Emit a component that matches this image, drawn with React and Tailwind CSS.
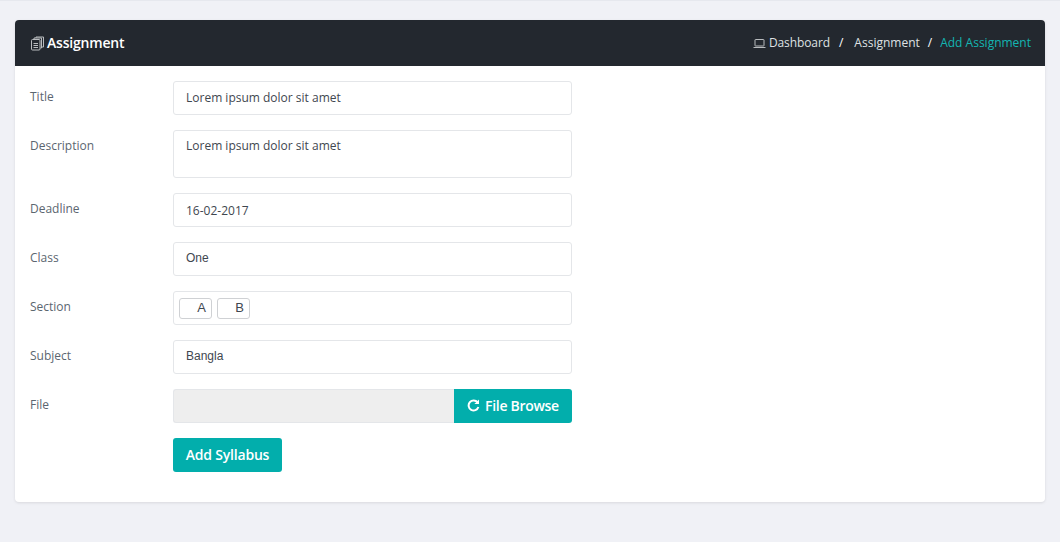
function Row({ label, children }) {
  return (
    <div className="flex">
      <label className="w-[143px] pt-[7px] text-[12px] leading-[18px] text-[#5b6670]">{label}</label>
      <div className="w-[399px]">{children}</div>
    </div>
  );
}

function Field({ value, helvetica, lower }) {
  return (
    <input
      readOnly
      value={value}
      className={`block h-[34px] w-full rounded-[3px] border border-[#e4e6e9] bg-white px-3 text-[#3f4750] outline-none ${
        lower ? "pb-0" : "pb-[2px]"
      } ${helvetica ? "font-['Liberation_Sans',sans-serif] text-[12px]" : "text-[12px]"}`}
    />
  );
}

function BooksIcon() {
  return (
    <svg width="13" height="15" viewBox="0 0 13 15" fill="none" stroke="#b9bcbf" strokeWidth="1">
      <rect x="0.5" y="3.5" width="8.5" height="10.5" rx="1" />
      <path d="M3 3V2h7.5v10H9.5M5 2V1h7.5v10H10.5" />
      <path d="M2.5 7.5h4.5M2.5 9.5h4.5M2.5 11.5h4.5" />
    </svg>
  );
}

function LaptopIcon() {
  return (
    <svg width="13" height="11" viewBox="0 0 13 11" fill="none" stroke="#b9bcbf" strokeWidth="1">
      <rect x="2" y="1.5" width="9" height="6.5" rx="0.5" />
      <path d="M0.5 9.5h12" />
    </svg>
  );
}

// font-awesome style refresh, thicker than the lucide one
function RefreshIcon() {
  return (
    <svg width="13" height="13" viewBox="0 0 13 13" fill="none" stroke="white" strokeWidth="2">
      <path d="M10.6 3.4A5 5 0 1 0 11.4 8" />
      <path d="M12 0.5v4.6H7.4z" fill="white" stroke="none" />
    </svg>
  );
}

export default function App() {
  return (
    <div className="h-[542px] overflow-hidden border-t border-[#e6e8ee] bg-[#f0f1f6] px-[15px] pt-[19px] font-['Open_Sans',sans-serif]">
      <div className="h-[482px] rounded-[4px] bg-white shadow-[0_1px_3px_rgba(0,0,0,0.1)]">
        <div className="flex h-[46px] items-center justify-between rounded-t-[4px] bg-[#23282f] pl-4 pr-[14px]">
          <div className="flex items-center gap-[3px] text-[14px] font-semibold tracking-[-0.2px] text-white">
            <BooksIcon />
            <span className="pb-[2px]">Assignment</span>
          </div>
          <div className="flex items-center text-[12px] text-[#dfe1e3]">
            <LaptopIcon />
            <span className="ml-[3px] tracking-[-0.1px]">Dashboard</span>
            <span className="ml-[9px] mr-[11px] text-white">/</span>
            <span>Assignment</span>
            <span className="mx-[8px] text-white">/</span>
            <span className="text-[#13b5b2]">Add Assignment</span>
          </div>
        </div>
        <form className="flex flex-col gap-[15px] pl-[15px] pt-[15px]">
          <Row label="Title">
            <Field value="Lorem ipsum dolor sit amet" />
          </Row>
          <Row label="Description">
            <textarea
              readOnly
              value="Lorem ipsum dolor sit amet"
              className="block h-[48px] w-full resize-none rounded-[3px] border border-[#e4e6e9] bg-white px-3 py-[6px] text-[12px] leading-[18px] text-[#3f4750] outline-none"
            />
          </Row>
          <Row label="Deadline">
            <Field value="16-02-2017" lower />
          </Row>
          <Row label="Class">
            <Field value="One" helvetica />
          </Row>
          <Row label="Section">
            <div className="flex h-[34px] items-center gap-[5px] rounded-[3px] border border-[#e4e6e9] px-[5px] font-['Liberation_Sans',sans-serif] text-[13px] text-[#3f4750]">
              <span className="flex h-[21px] w-[33px] items-center justify-end rounded-[3px] border border-[#cfd1d4] pb-[1px] pr-[5px]">A</span>
              <span className="flex h-[21px] w-[33px] items-center justify-end rounded-[3px] border border-[#cfd1d4] pb-[1px] pr-[5px]">B</span>
            </div>
          </Row>
          <Row label="Subject">
            <Field value="Bangla" helvetica />
          </Row>
          <Row label="File">
            <div className="flex h-[34px]">
              <div className="flex-1 rounded-l-[3px] border border-r-0 border-[#e4e6e9] bg-[#eeeeee]" />
              <button type="button" className="flex w-[118px] items-center justify-center gap-[5px] rounded-r-[3px] bg-[#02aeac] pb-[2px] text-[14px] font-semibold tracking-[-0.3px] text-white">
                <RefreshIcon />
                File Browse
              </button>
            </div>
          </Row>
          <div className="pl-[143px]">
            <button type="button" className="h-[34px] w-[109px] rounded-[3px] bg-[#02aeac] pb-[2px] text-[14px] font-semibold tracking-[-0.2px] text-white">
              Add Syllabus
            </button>
          </div>
        </form>
      </div>
    </div>
  );
}
